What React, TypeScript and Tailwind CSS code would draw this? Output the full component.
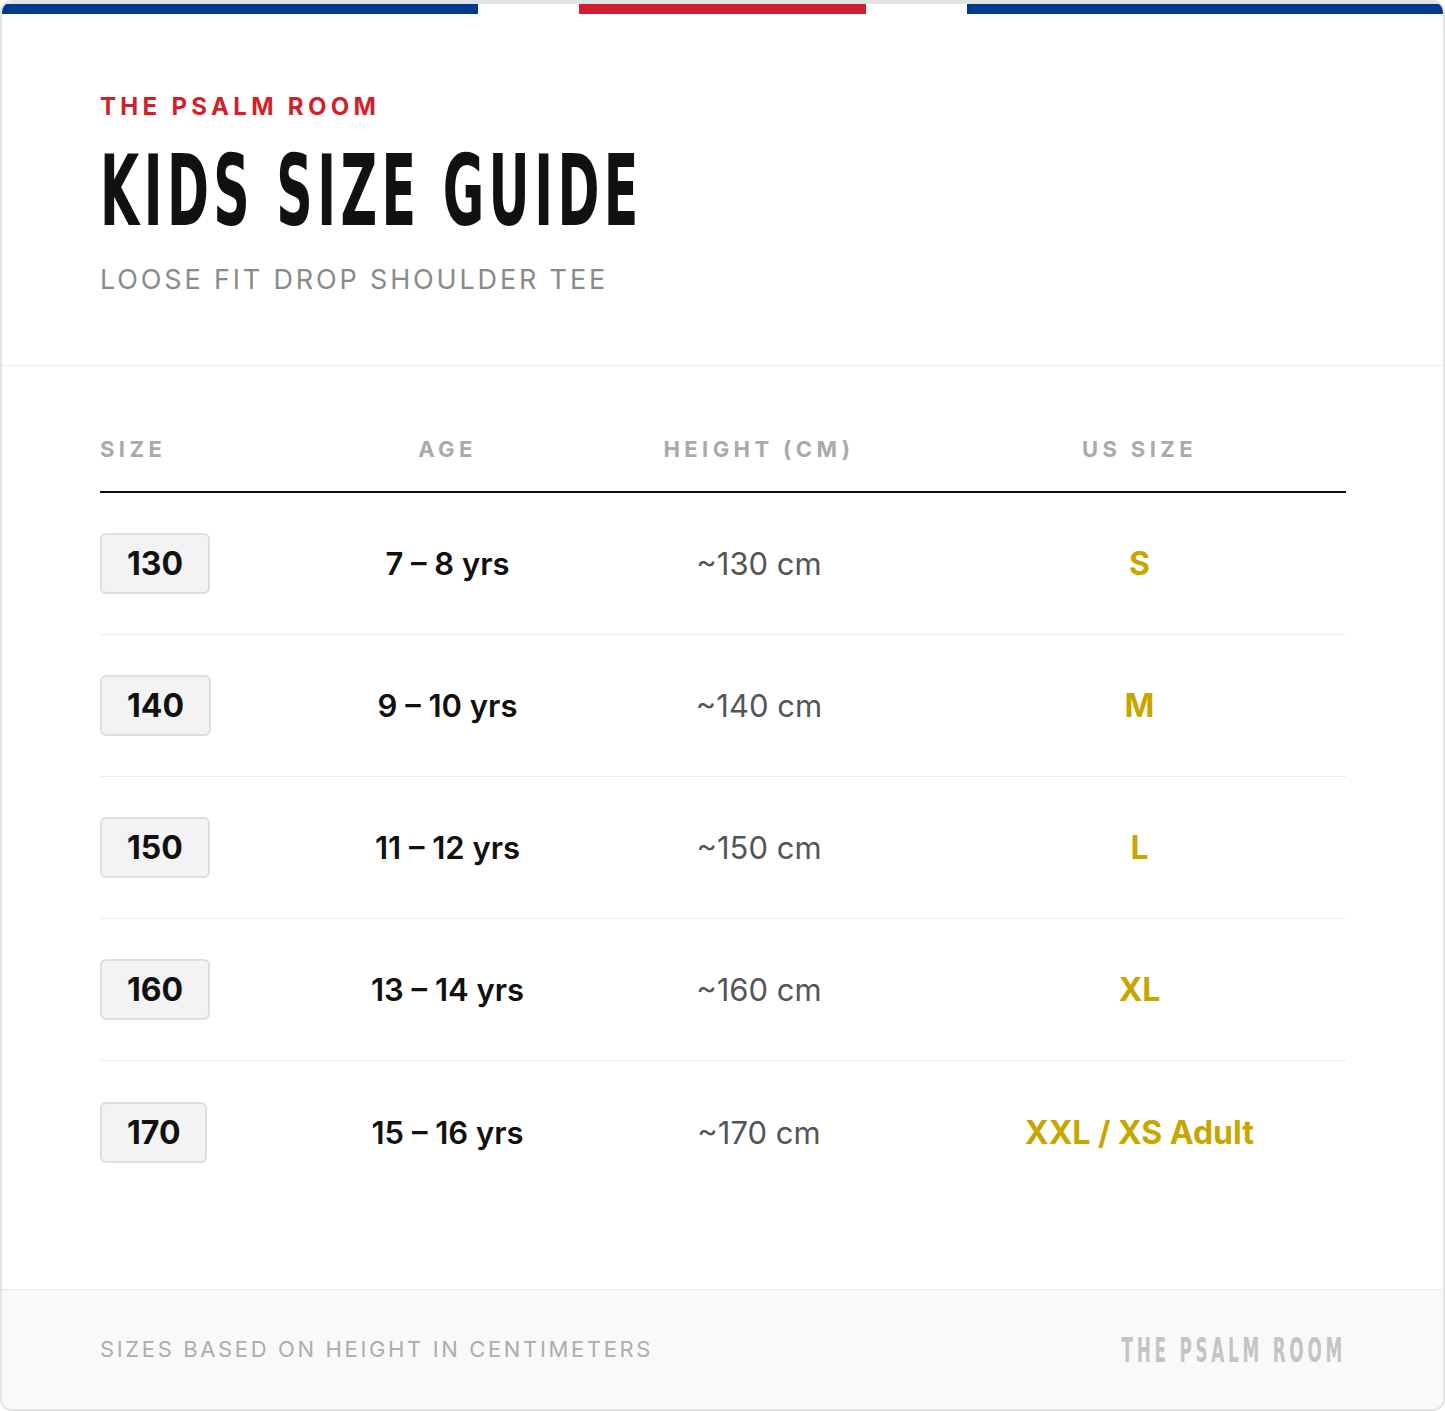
import React from 'react';

type Row = { size: string; age: string; height: string; us: string };

const rows: Row[] = [
  { size: '130', age: '7 – 8 yrs', height: '~130 cm', us: 'S' },
  { size: '140', age: '9 – 10 yrs', height: '~140 cm', us: 'M' },
  { size: '150', age: '11 – 12 yrs', height: '~150 cm', us: 'L' },
  { size: '160', age: '13 – 14 yrs', height: '~160 cm', us: 'XL' },
  { size: '170', age: '15 – 16 yrs', height: '~170 cm', us: 'XXL / XS Adult' },
];

const condensed = "font-['DejaVu_Sans_Condensed','DejaVu_Sans',sans-serif] font-bold [font-stretch:condensed]";

export default function App() {
  return (
    <div className="min-h-screen bg-white font-['Inter','Liberation_Sans',sans-serif]">
      <div className="flex flex-col h-[1411px] border-2 border-[#e3e3e3] rounded-[12px] overflow-hidden bg-white">
        {/* flag stripe */}
        <div className="flex h-[12px] border-t-2 border-[#e3e3e3]">
          <div className="flex-1 bg-[#003a8c]" />
          <div className="w-[101px] bg-white" />
          <div className="w-[287px] bg-[#d0202e]" />
          <div className="w-[101px] bg-white" />
          <div className="flex-1 bg-[#003a8c]" />
        </div>

        {/* header */}
        <header className="h-[352px] flex flex-col px-[98px] pt-[78px] border-b border-[#e9e9e9]">
          <p className="text-[24px] leading-[30px] font-bold tracking-[0.18em] text-[#d31f2a]">THE PSALM ROOM</p>
          <h1 className="mt-[19px] h-[100px] leading-[100px] text-[#111111]">
            <span className={`inline-block origin-left scale-x-[0.573] text-[98px] tracking-[0.08em] ${condensed}`}>
              KIDS SIZE GUIDE
            </span>
          </h1>
          <p className="mt-[23px] text-[27px] leading-[32px] tracking-[0.105em] text-[#8a8a8a]">LOOSE FIT DROP SHOULDER TEE</p>
        </header>

        {/* table */}
        <section className="flex-1 pl-[98px] pr-[97px] pt-[71px]">
          <div className="grid grid-cols-[210px_275px_348px_1fr] items-center h-[56px] pb-[30px] border-b-2 border-[#111111] text-[22px] leading-[24px] font-bold tracking-[0.2em] text-[#aaaaaa]">
            <div>SIZE</div>
            <div className="text-center">AGE</div>
            <div className="text-center">HEIGHT (CM)</div>
            <div className="text-center">US SIZE</div>
          </div>
          {rows.map((r) => (
            <div
              key={r.size}
              className="grid grid-cols-[210px_275px_348px_1fr] items-center h-[142px] border-b border-[#ececec] last:border-b-0 leading-[37px]"
            >
              <div>
                <span className="inline-block px-[25px] py-[10px] rounded-[6px] bg-[#f3f3f3] border-2 border-[#dedede] text-[32px] font-bold text-[#111111]">
                  {r.size}
                </span>
              </div>
              <div className="text-center text-[31px] font-semibold text-[#111111]">{r.age}</div>
              <div className="text-center text-[31px] text-[#555555]">{r.height}</div>
              <div className="text-center text-[32px] font-bold text-[#c8a600]">{r.us}</div>
            </div>
          ))}
        </section>

        {/* footer */}
        <footer className="h-[120px] flex items-center justify-between pl-[98px] pr-[97px] border-t border-[#e9e9e9] bg-[#f9f9f9]">
          <p className="text-[22px] tracking-[0.12em] text-[#adadad]">SIZES BASED ON HEIGHT IN CENTIMETERS</p>
          <span className={`inline-block origin-right scale-x-[0.55] text-[34px] leading-[40px] tracking-[0.2em] text-[#c4c4c4] ${condensed}`}>
            THE PSALM ROOM
          </span>
        </footer>
      </div>
    </div>
  );
}
